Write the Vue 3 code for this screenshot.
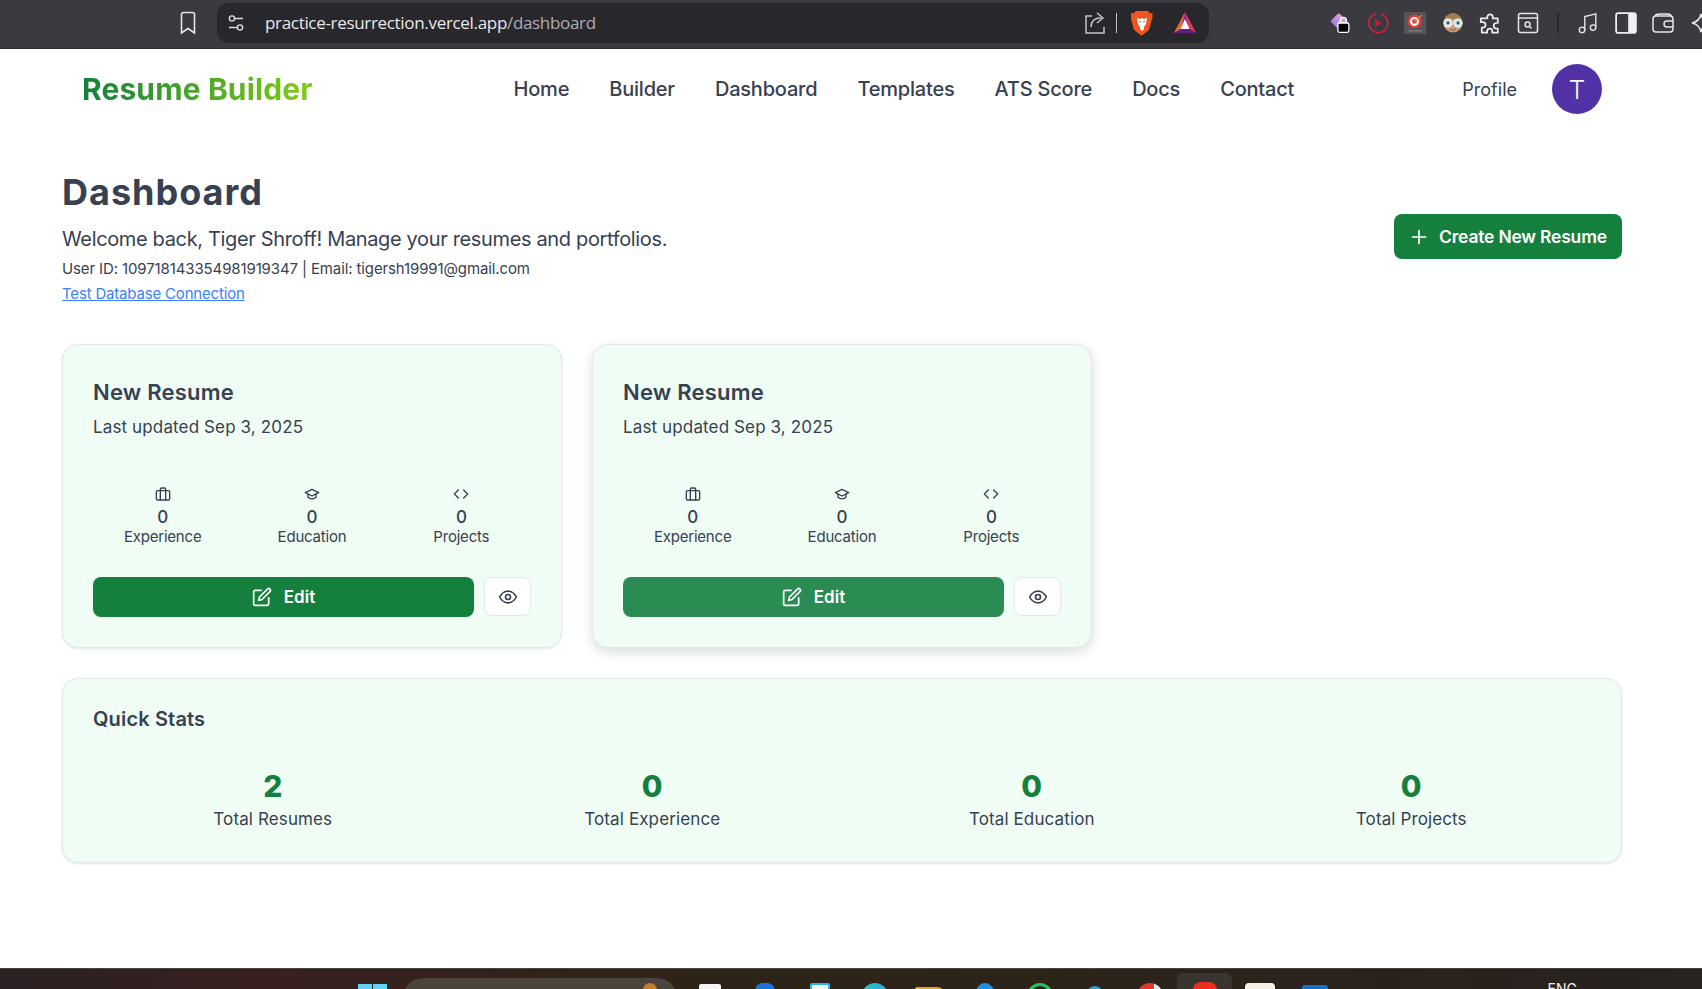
<template>
  <div class="page">
    <!-- browser chrome -->
    <div class="toolbar">
      <svg class="bookmark" width="18" height="24" viewBox="0 0 18 24" fill="none" stroke="#e6e6e8" stroke-width="1.6">
        <path d="M2.5 3.5a2 2 0 0 1 2-2h9a2 2 0 0 1 2 2v18.5L9 17.5 2.5 22z" />
      </svg>
      <div class="address">
        <svg width="18" height="20" viewBox="0 0 18 20" fill="none" stroke="#dcdcde" stroke-width="1.4">
          <circle cx="5" cy="5.5" r="2.6" />
          <path d="M8 5.5h8M2 14.5h8" />
          <circle cx="13" cy="14.5" r="2.6" />
        </svg>
        <span class="url">practice-resurrection.vercel.app<span class="url-path">/dashboard</span></span>
        <div class="address-icons">
          <svg width="22" height="24" viewBox="0 0 22 24" fill="none" stroke="#c4c4c7" stroke-width="1.5">
            <path d="M8 5H2v17h18v-6" />
            <path d="M7 16c0-6 4-9 10-9M13 2l6 5-6 5" />
          </svg>
          <span class="address-sep"></span>
          <svg class="brave" width="22" height="26" viewBox="0 0 22 26">
            <path d="M5 1h12l2 2.500 2.500-.5v4l-1 4-2.500 9-6.500 5-1 .5-1-.5-6.500-5-2.500-9-1-4v-4l2.500.5z" fill="#f1561f" />
            <path d="M6 8l3 1 2-1 2 1 3-1-1 6-2 3v2l-2 2-2-2v-2l-2-3z" fill="#fff" />
            <path d="M8 11.500l2 .5M14 11.500l-2 .5" stroke="#f1561f" stroke-width="1.200" />
          </svg>
          <svg class="bat" width="24" height="24" viewBox="0 0 24 24">
            <path d="M12 1 1 22h22z" fill="#7c2a9c" />
            <path d="M12 1 1 22l7-4z" fill="#f0682a" />
            <path d="M12 1l11 21-7-4z" fill="#e33a4e" />
            <path d="M1 22h22l-6-4H8z" fill="#5b1f86" />
            <path d="M12 8 7.500 18h9z" fill="#fff" />
          </svg>
        </div>
      </div>
      <div class="extensions">
        <svg viewBox="0 0 24 26">
          <defs>
            <linearGradient id="gem" x1="0" y1="1" x2="1" y2="0">
              <stop offset="0" stop-color="#8f6cf5" />
              <stop offset="1" stop-color="#f2b3c8" />
            </linearGradient>
          </defs>
          <path d="M9 2.500a2 2 0 0 1 3 0l8 8a2 2 0 0 1 0 3l-7 7a2 2 0 0 1-3 0l-8-8a2 2 0 0 1 0-3z" fill="url(#gem)" />
          <rect x="9.500" y="13" width="13" height="11" rx="2" fill="#000" stroke="#fff" stroke-width="1.500" />
          <path d="M12.500 13v-3a3.500 3.500 0 0 1 7 0v3" fill="none" stroke="#fff" stroke-width="1.800" />
        </svg>
        <svg viewBox="0 0 22 22" fill="none">
          <path d="M14 2a9.500 9.500 0 1 1-5.500 0" stroke="#d61f45" stroke-width="1.600" />
          <path d="M8 6.500v9l7-4.500z" fill="#b91c3f" />
        </svg>
        <svg viewBox="0 0 21 21">
          <rect width="21" height="21" fill="#55555a" />
          <circle cx="10" cy="9" r="6.500" fill="#e43d3d" />
          <circle cx="10" cy="9" r="4.300" fill="#fff" />
          <circle cx="10" cy="9" r="2.300" fill="#e43d3d" />
          <path d="M10 9l7-6" stroke="#e8913a" stroke-width="1.200" />
          <path d="M4 18h13" stroke="#8a8a8d" />
        </svg>
        <svg viewBox="0 0 22 22">
          <circle cx="11" cy="11" r="9.500" fill="#c89a72" />
          <path d="M2 10a9 9 0 0 1 18 0c-3-3-6-3-9-3s-6 0-9 3z" fill="#a47c54" />
          <circle cx="6" cy="11" r="4" fill="#bfe3e8" stroke="#fff" stroke-width="1.200" />
          <circle cx="16" cy="11" r="4" fill="#bfe3e8" stroke="#fff" stroke-width="1.200" />
          <circle cx="6" cy="11" r="1.400" fill="#3a4a50" />
          <circle cx="16" cy="11" r="1.400" fill="#3a4a50" />
          <path d="M8 17c2 1.500 4 1.500 6 0" stroke="#8a5a44" fill="none" />
        </svg>
        <svg viewBox="0 0 24 24" fill="none" stroke="#ececee" stroke-width="1.900" stroke-linejoin="round">
          <path d="M9 5.500a3 3 0 0 1 6 0V7h5.500v5H19a3 3 0 0 0 0 6h1.500v4.500h-6V21a2.800 2.800 0 0 0-5.600 0v1.500H3V17h1.200a3 3 0 0 0 0-6H2V7h7z" />
        </svg>
        <svg viewBox="0 0 22 22" fill="none" stroke="#e6e6e8" stroke-width="1.500">
          <rect x="1.500" y="1.500" width="19" height="19" rx="2" />
          <path d="M1.500 6h19" />
          <circle cx="10.500" cy="12.500" r="2.500" />
          <path d="M12.500 14.500l2 2" />
        </svg>
        <span class="ext-sep"></span>
        <svg viewBox="0 0 22 24" fill="none" stroke="#e6e6e8" stroke-width="1.500">
          <circle cx="4.500" cy="19.500" r="3" />
          <circle cx="16.500" cy="17" r="3" />
          <path d="M7.500 19.500V5l12-3v15" />
        </svg>
        <svg viewBox="0 0 20 20">
          <rect x="1" y="1" width="18" height="18" rx="2" fill="none" stroke="#f0f0f2" stroke-width="1.600" />
          <rect x="12" y="1" width="7" height="18" fill="#f0f0f2" />
        </svg>
        <svg viewBox="0 0 22 20" fill="none" stroke="#e6e6e8" stroke-width="1.500">
          <rect x="1" y="3" width="20" height="16" rx="3" />
          <path d="M3 3c1-2 3-2 5-2h8c2 0 3 1 4 3" />
          <path d="M21 8h-6a2.500 2.500 0 0 0 0 6h6" />
        </svg>
        <svg viewBox="0 0 22 22" fill="none" stroke="#e6e6e8" stroke-width="1.600">
          <path d="M11 2c1 5 4 8 9 9-5 1-8 4-9 9-1-5-4-8-9-9 5-1 8-4 9-9z" />
        </svg>
      </div>
    </div>

    <!-- site nav -->
    <nav class="nav">
      <span class="logo">Resume Builder</span>
      <ul class="links">
        <li v-for="link in navLinks" :key="link">{{ link }}</li>
      </ul>
      <span class="profile">Profile</span>
      <span class="avatar">T</span>
    </nav>

    <main class="content">
      <header class="head">
        <div>
          <h1>Dashboard</h1>
          <p class="welcome">Welcome back, Tiger Shroff! Manage your resumes and portfolios.</p>
          <p class="user-info">User ID: 109718143354981919347 | Email: tigersh19991@gmail.com</p>
          <a class="test-link" href="#">Test Database Connection</a>
        </div>
        <button class="create-btn">
          <svg width="20" height="20" viewBox="0 0 20 20" fill="none" stroke="#fff" stroke-width="1.700" stroke-linecap="round">
            <path d="M10 3.500v13M3.500 10h13" />
          </svg>
          Create New Resume
        </button>
      </header>

      <section class="cards">
        <article
          v-for="(resume, i) in resumes"
          :key="i"
          class="card"
          :class="{ hovered: resume.hovered }"
        >
          <h2>{{ resume.title }}</h2>
          <p class="updated">Last updated {{ resume.updated }}</p>
          <div class="mini-stats">
            <div class="mini">
              <svg width="16" height="16" viewBox="0 0 24 24" fill="none" stroke="#374151" stroke-width="2" stroke-linecap="round" stroke-linejoin="round">
                <rect x="2" y="7" width="20" height="14" rx="2" />
                <path d="M16 21V5a2 2 0 0 0-2-2h-4a2 2 0 0 0-2 2v16" />
              </svg>
              <strong>0</strong>
              <span>Experience</span>
            </div>
            <div class="mini">
              <svg width="16" height="16" viewBox="0 0 24 24" fill="none" stroke="#374151" stroke-width="2" stroke-linecap="round" stroke-linejoin="round">
                <path d="M22 10 12 5 2 10l10 5 10-5z" />
                <path d="M6 12v5c3 3 9 3 12 0v-5" />
              </svg>
              <strong>0</strong>
              <span>Education</span>
            </div>
            <div class="mini">
              <svg width="16" height="16" viewBox="0 0 24 24" fill="none" stroke="#374151" stroke-width="2" stroke-linecap="round" stroke-linejoin="round">
                <path d="m16 18 6-6-6-6M8 6l-6 6 6 6" />
              </svg>
              <strong>0</strong>
              <span>Projects</span>
            </div>
          </div>
          <div class="actions">
            <button class="edit-btn">
              <svg width="20" height="20" viewBox="0 0 24 24" fill="none" stroke="#fff" stroke-width="2" stroke-linecap="round" stroke-linejoin="round">
                <path d="M11 4H4a2 2 0 0 0-2 2v14a2 2 0 0 0 2 2h14a2 2 0 0 0 2-2v-7" />
                <path d="M18.500 2.500a2.120 2.120 0 0 1 3 3L12 15l-4 1 1-4z" />
              </svg>
              Edit
            </button>
            <button class="view-btn">
              <svg width="20" height="20" viewBox="0 0 24 24" fill="none" stroke="#374151" stroke-width="2" stroke-linecap="round" stroke-linejoin="round">
                <path d="M2 12s3.500-7 10-7 10 7 10 7-3.500 7-10 7-10-7-10-7z" />
                <circle cx="12" cy="12" r="3" />
              </svg>
            </button>
          </div>
        </article>
      </section>

      <section class="quick">
        <h3>Quick Stats</h3>
        <div class="quick-grid">
          <div v-for="stat in quickStats" :key="stat.label" class="quick-item">
            <strong>{{ stat.value }}</strong>
            <span>{{ stat.label }}</span>
          </div>
        </div>
      </section>
    </main>

    <!-- windows taskbar, cut off by the screenshot -->
    <footer class="taskbar">
      <div class="win-logo"><i></i><i></i></div>
      <div class="search-pill"><i class="search-doodle"></i></div>
      <div class="tray-apps">
        <div v-for="app in taskApps" :key="app" class="task-app" :class="app"><i></i></div>
      </div>
      <span class="eng">ENG</span>
    </footer>
  </div>
</template>

<script setup>
const navLinks = ["Home", "Builder", "Dashboard", "Templates", "ATS Score", "Docs", "Contact"];

const resumes = [
  { title: "New Resume", updated: "Sep 3, 2025", hovered: false },
  { title: "New Resume", updated: "Sep 3, 2025", hovered: true },
];

const quickStats = [
  { value: 2, label: "Total Resumes" },
  { value: 0, label: "Total Experience" },
  { value: 0, label: "Total Education" },
  { value: 0, label: "Total Projects" },
];

const taskApps = [
  "app-white", "app-blue", "app-store", "app-teal", "app-folder", "app-drop",
  "app-green", "app-sky", "app-chrome", "app-brave", "app-cream", "app-vs",
];
</script>

<style>
html,
body {
  margin: 0;
  background: #fff;
}
</style>

<style scoped>
.page {
  height: 989px;
  display: flex;
  flex-direction: column;
  overflow: hidden;
  font-family: Inter, "Liberation Sans", sans-serif;
  color: #374151;
  background: #fff;
}

/* toolbar */
.toolbar {
  height: 49px;
  flex: none;
  display: flex;
  align-items: center;
  padding: 0 0 2px 179px;
  background: #3b3a40;
  border-bottom: 1px solid #2c2c30;
  box-sizing: border-box;
  overflow: hidden;
}

.bookmark {
  flex: none;
  margin-right: 20px;
}

.address {
  flex: none;
  width: 992px;
  height: 40px;
  border-radius: 12px;
  background: #28272c;
  display: flex;
  align-items: center;
  padding: 0 12px 0 10px;
  box-sizing: border-box;
  color: #e8e8ea;
}

.url {
  margin: -2px 0 0 20px;
  font-family: "Open Sans", sans-serif;
  font-size: 17px;
  letter-spacing: -0.32px;
}

.url-path {
  color: #aeaeb2;
}

.address-icons {
  margin-left: auto;
  display: flex;
  align-items: center;
  gap: 10px;
}

.address-sep {
  width: 1px;
  height: 20px;
  background: #c4c4c7;
}

.brave {
  margin-left: 4px;
}

.bat {
  margin-left: 10px;
}

.extensions {
  flex: none;
  margin-left: 120px;
  display: flex;
  align-items: center;
  gap: 15.5px;
}

.extensions svg {
  flex: none;
  width: 22px;
  height: 22px;
}

.ext-sep {
  flex: none;
  width: 2px;
  height: 20px;
  background: #28272c;
  margin: 0 2.75px;
}

/* nav */
.nav {
  height: 80px;
  flex: none;
  display: flex;
  align-items: center;
  padding: 0 100px 0 82px;
  background: #fff;
}

.logo {
  flex: none;
  margin-right: 201px;
  font-size: 30px;
  font-weight: 700;
  letter-spacing: 0.12px;
  background: linear-gradient(90deg, #15803d, #84cc16);
  -webkit-background-clip: text;
  background-clip: text;
  color: transparent;
}

.links {
  list-style: none;
  display: flex;
  gap: 40px;
  margin: 0;
  padding: 0;
  font-size: 20px;
  font-weight: 500;
  letter-spacing: -0.2px;
}

.profile {
  margin-left: auto;
  margin-right: 35px;
  font-size: 18px;
  font-weight: 400;
}

.avatar {
  width: 50px;
  height: 50px;
  border-radius: 50%;
  background: #5230a6;
  color: #fff;
  font-size: 26px;
  font-weight: 300;
  display: flex;
  align-items: center;
  justify-content: center;
}

/* main */
.content {
  flex: 1;
  padding: 43px 80px 0 62px;
}

.head {
  display: flex;
  justify-content: space-between;
  align-items: center;
  margin-bottom: 40px;
}

h1 {
  margin: 0 0 13px;
  font-size: 36px;
  line-height: 40px;
  font-weight: 700;
  letter-spacing: 1px;
}

.welcome {
  margin: 0 0 6px;
  font-size: 20px;
  line-height: 28px;
  letter-spacing: -0.35px;
}

.user-info {
  margin: 0 0 5px;
  font-size: 15px;
  line-height: 20px;
  letter-spacing: -0.12px;
}

.test-link {
  display: block;
  font-size: 15px;
  line-height: 20px;
  letter-spacing: -0.18px;
  color: #3b82f6;
}

.create-btn {
  display: flex;
  align-items: center;
  gap: 10px;
  width: 228px;
  height: 45px;
  padding: 0 0 0 15px;
  margin-bottom: 3px;
  border: none;
  border-radius: 8px;
  background: #15803d;
  color: #fff;
  font: 600 17.5px Inter, sans-serif;
  letter-spacing: -0.2px;
}

.cards {
  display: flex;
  gap: 30px;
  margin-bottom: 30px;
}

.card {
  width: 500px;
  box-sizing: border-box;
  padding: 30px;
  border: 1px solid #e5e7eb;
  border-radius: 16px;
  background: #f0fdf4;
  box-shadow: 0 1px 3px rgba(0, 0, 0, 0.1);
}

.card.hovered {
  box-shadow: 0 4px 12px rgba(0, 0, 0, 0.14);
}

h2 {
  margin: 0 0 5px;
  font-size: 22px;
  line-height: 34px;
  font-weight: 600;
  letter-spacing: 0.2px;
}

.updated {
  margin: 0 0 46px;
  font-size: 17px;
  line-height: 26px;
  letter-spacing: 0.13px;
}

.mini-stats {
  display: grid;
  grid-template-columns: repeat(3, 1fr);
  gap: 10px;
  margin-bottom: 31px;
}

.mini {
  display: flex;
  flex-direction: column;
  align-items: center;
  font-size: 15px;
  line-height: 18px;
  letter-spacing: -0.2px;
}

.mini strong {
  margin-top: 4px;
  font-size: 17px;
  line-height: 22px;
  font-weight: 500;
}

.actions {
  display: flex;
  align-items: flex-start;
  gap: 10px;
}

.edit-btn {
  flex: 1;
  height: 40px;
  display: flex;
  align-items: center;
  justify-content: center;
  gap: 12px;
  border: none;
  border-radius: 8px;
  background: #15803d;
  color: #fff;
  font: 600 17px Inter, sans-serif;
}

.card.hovered .edit-btn {
  background: #2a8c52;
}

.view-btn {
  width: 47px;
  height: 39px;
  display: flex;
  align-items: center;
  justify-content: center;
  padding: 0;
  border: 1px solid #e5e7eb;
  border-radius: 8px;
  background: #fff;
}

.quick {
  box-sizing: border-box;
  height: 185px;
  padding: 30px;
  border: 1px solid #e5e7eb;
  border-radius: 16px;
  background: #f0fdf4;
  box-shadow: 0 1px 3px rgba(0, 0, 0, 0.1);
}

h3 {
  margin: 0 0 39px;
  font-size: 20px;
  line-height: 20px;
  font-weight: 600;
  letter-spacing: 0.15px;
}

.quick-grid {
  display: grid;
  grid-template-columns: repeat(4, 1fr);
  gap: 20px;
}

.quick-item {
  display: flex;
  flex-direction: column;
  align-items: center;
}

.quick-item strong {
  font-size: 30px;
  line-height: 36px;
  font-weight: 800;
  color: #15803d;
}

.quick-item span {
  margin-top: 3px;
  font-size: 17px;
  line-height: 24px;
  letter-spacing: 0.12px;
}

/* taskbar */
.taskbar {
  height: 21px;
  flex: none;
  display: flex;
  overflow: hidden;
  padding-left: 358px;
  box-sizing: border-box;
  color: #f2f2f2;
  background: linear-gradient(90deg, #2a2122, #38201f 15%, #2f2318 40%, #2c2418 60%, #2b211d 85%, #262320);
  border-top: 1px solid #45413c;
}

.win-logo {
  flex: none;
  width: 29px;
  margin-top: 15px;
  display: flex;
  gap: 1px;
}

.win-logo i {
  flex: 1;
  height: 12px;
  background: #5fd4f8;
}

.search-pill {
  flex: none;
  position: relative;
  width: 274px;
  height: 40px;
  margin: 9px 0 0 16px;
  border-radius: 20px;
  background: #4a443c;
}

.search-doodle {
  position: absolute;
  top: 5px;
  right: 20px;
  width: 14px;
  height: 14px;
  border-radius: 50%;
  background: #c67d24;
}

.tray-apps {
  display: flex;
  flex: none;
  margin-left: 5px;
}

.task-app {
  position: relative;
  width: 55px;
  height: 40px;
  display: flex;
  justify-content: center;
  padding-top: 14px;
  box-sizing: border-box;
}

.task-app i {
  width: 26px;
  height: 26px;
  border-radius: 50%;
  background: #3a9be8;
}

.app-white i { background: #f4f4f4; border-radius: 2px; width: 22px; margin-top: 1px; }
.app-blue i { background: #1a73d8; border-radius: 8px 8px 0 0; width: 20px; }
.app-store i { background: #f4f4f4; border: 2px solid #29b6f6; border-radius: 2px; width: 20px; box-sizing: border-box; }
.app-teal i { background: linear-gradient(90deg, #2ec4b6, #22a7e8); width: 26px; }
.app-folder i { background: #e8a80c; border-radius: 2px 8px 0 0; width: 30px; margin-top: 4px; }
.app-drop i { background: #1f8fe0; border-radius: 50% 50% 0 0; width: 20px; }
.app-green i { background: none; border: 3px solid #22c55e; box-sizing: border-box; }
.app-sky i { background: #2aa3dc; width: 20px; margin-top: 3px; }
.app-chrome i { background: linear-gradient(90deg, #e0392b 65%, #e8e8e8 65%); }
.app-brave { background: #3a342f; border-radius: 6px 6px 0 0; padding-top: 9px; height: 40px; margin-top: 4px; }
.app-brave i { background: #ee2d1f; width: 24px; border-radius: 8px 8px 0 0; }
.app-cream i { background: #f7efe4; border-radius: 4px; width: 30px; margin-top: 0; }
.app-vs i { background: #1c6fc9; border-radius: 3px; width: 26px; margin-top: 2px; }

.eng {
  margin: 12px 125px 0 auto;
  font-size: 14px;
  line-height: 16px;
}
</style>
